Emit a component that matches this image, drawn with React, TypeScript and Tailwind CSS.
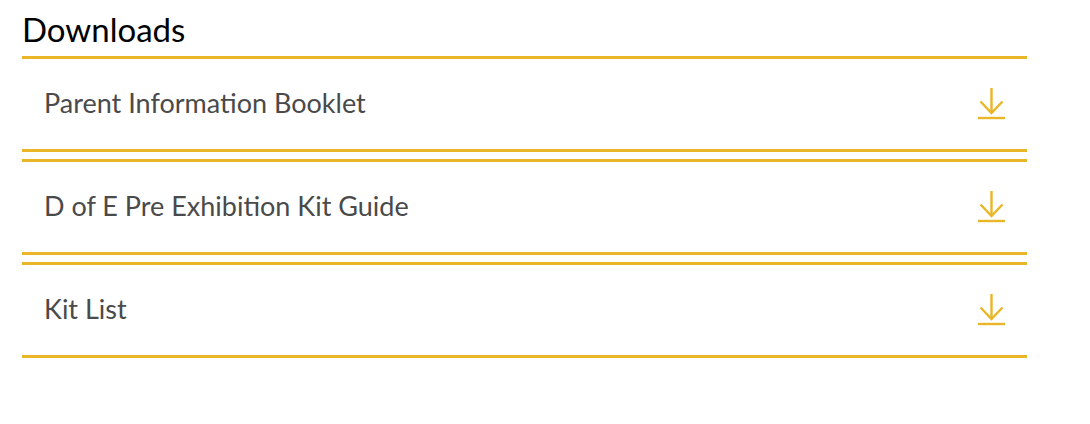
interface Download {
    title: string
    href: string
}

const downloads: Download[] = [
    { title: 'Parent Information Booklet', href: '#parent-information-booklet' },
    { title: 'D of E Pre Exhibition Kit Guide', href: '#kit-guide' },
    { title: 'Kit List', href: '#kit-list' },
]

function DownloadIcon() {
    return (
        <svg
            width="28"
            height="34"
            viewBox="0 0 28 34"
            fill="none"
            stroke="currentColor"
            strokeWidth="2.4"
            aria-hidden="true"
            className="shrink-0"
        >
            <path d="M14.500 1v25" />
            <path d="M3.500 14.500L14.500 26l11-11.500" />
            <path d="M1 31h27" />
        </svg>
    )
}

export default function App() {
    return (
        <section className="pt-[10px] pl-[22px] pr-[63px] font-['Lato',sans-serif]">
            <h2 className="text-[33px] leading-[38px] text-black mb-2">Downloads</h2>
            <ul className="flex flex-col gap-[7px]">
                {downloads.map((item) => (
                    <li key={item.href}>
                        <a
                            href={item.href}
                            className="flex items-start justify-between gap-6 px-[22px] py-7 border-y-3 border-[#eab526] text-[#eab526]"
                        >
                            <span className="text-[27px] leading-[32px] text-[#4a4a4a]">{item.title}</span>
                            <DownloadIcon />
                        </a>
                    </li>
                ))}
            </ul>
        </section>
    )
}
